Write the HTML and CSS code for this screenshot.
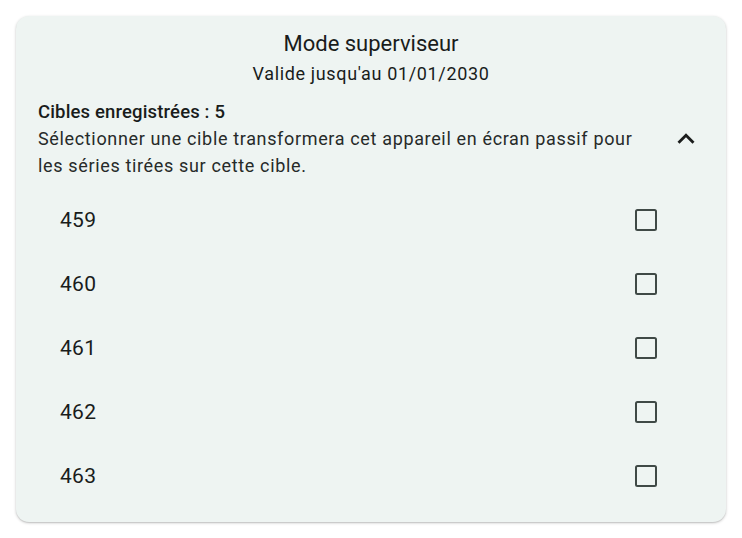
FILE: index.html
```html
<!DOCTYPE html>
<html lang="fr">
<head>
<meta charset="utf-8">
<link rel="stylesheet" href="styles.css">
</head>
<body>
<div class="card">
  <div class="title">Mode superviseur</div>
  <div class="subtitle">Valide jusqu'au 01/01/2030</div>
  <div class="section">
    <div class="section-text">
      <div class="section-title">Cibles enregistrées : 5</div>
      <div class="section-desc">Sélectionner une cible transformera cet appareil en écran passif pour les séries tirées sur cette cible.</div>
    </div>
    <svg class="chevron" viewBox="0 0 24 24" width="34" height="34"><path d="M7.41 15.41 12 10.83l4.59 4.58L18 14l-6-6-6 6z" fill="#1b1d1c"/></svg>
  </div>
  <div class="list">
    <div class="row"><span class="num">459</span><span class="box"></span></div>
    <div class="row"><span class="num">460</span><span class="box"></span></div>
    <div class="row"><span class="num">461</span><span class="box"></span></div>
    <div class="row"><span class="num">462</span><span class="box"></span></div>
    <div class="row"><span class="num">463</span><span class="box"></span></div>
  </div>
</div>
</body>
</html>
```
FILE: styles.css
```css
html, body {
  margin: 0;
  padding: 0;
  background: #ffffff;
}
body {
  font-family: Roboto, "Noto Sans", sans-serif;
  color: #191c1b;
  padding: 16px;
  width: 710px;
}
.card {
  background: #eef4f2;
  border-radius: 13px;
  box-shadow: 0 1px 3px rgba(0,0,0,0.22), 0 1px 1px rgba(0,0,0,0.08);
  padding: 14px 0 14px 0;
  display: flex;
  flex-direction: column;
}
.title {
  text-align: center;
  font-size: 22px;
  line-height: 28px;
}
.subtitle {
  text-align: center;
  font-size: 18px;
  letter-spacing: 0.65px;
  line-height: 24px;
  margin-top: 4px;
}
.section {
  display: flex;
  align-items: center;
  padding: 0 23px 0 22px;
  margin-top: 13px;
  gap: 16px;
}
.section-text {
  flex: 1;
}
.section-title {
  font-size: 18.5px;
  font-weight: 500;
  letter-spacing: 0.15px;
  line-height: 26px;
}
.section-desc {
  font-size: 18px;
  letter-spacing: 0.65px;
  line-height: 27px;
  color: #262a29;
}
.chevron {
  flex: none;
}
.list {
  margin-top: 9px;
  display: flex;
  flex-direction: column;
}
.row {
  height: 64px;
  display: flex;
  align-items: center;
  justify-content: space-between;
  padding: 0 69px 0 44px;
}
.num {
  font-size: 21px;
  letter-spacing: 0.3px;
}
.box {
  width: 18px;
  height: 18px;
  border: 2.7px solid #3f4946;
  border-radius: 2.5px;
}
```
